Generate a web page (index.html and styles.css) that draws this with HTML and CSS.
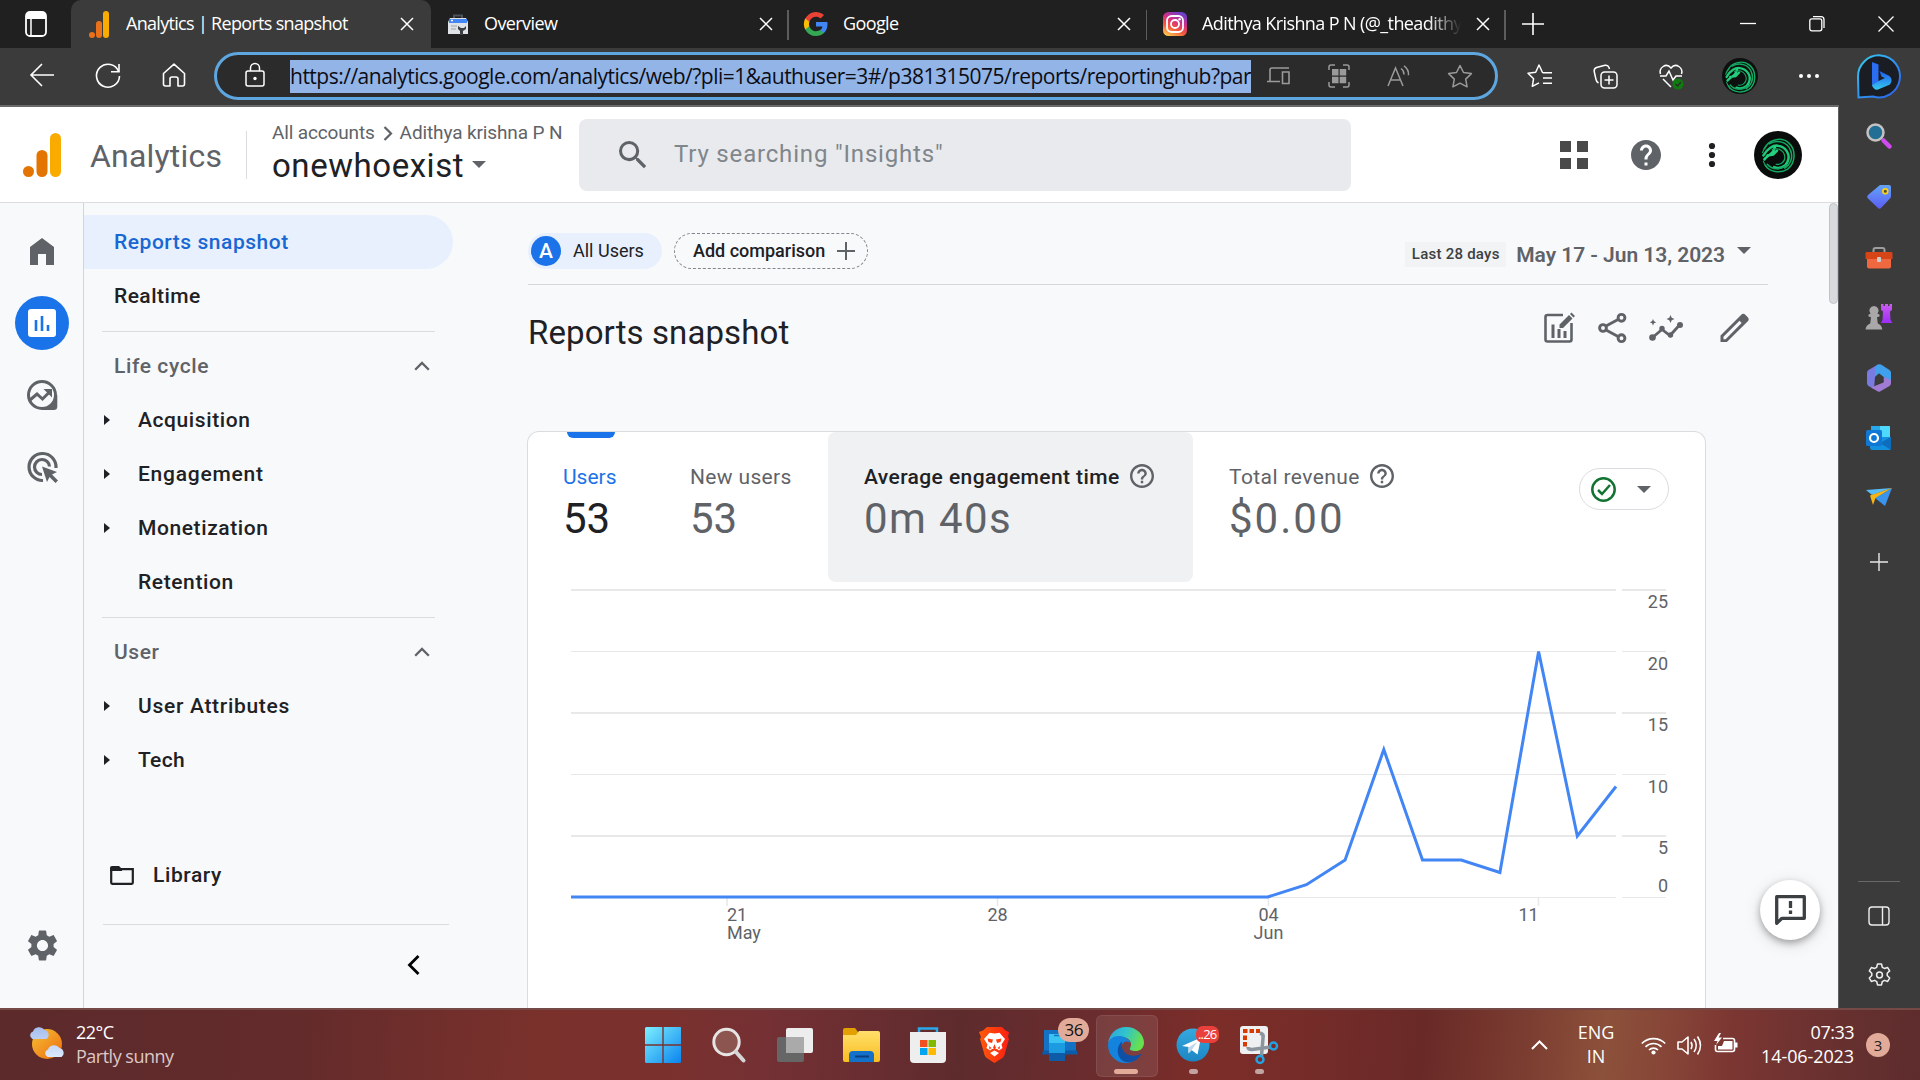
FILE: index.html
```html
<!DOCTYPE html>
<html lang="en">
<head>
<meta charset="utf-8">
<title>Analytics | Reports snapshot</title>
<link rel="stylesheet" href="styles.css">
</head>
<body>
<svg class="defs" width="0" height="0">
  <defs>
    <linearGradient id="gBlue" x1="0" y1="0" x2="1" y2="1"><stop offset="0" stop-color="#7df0ff"/><stop offset="1" stop-color="#0a84ee"/></linearGradient>
    <linearGradient id="gInsta" x1="0.2" y1="1" x2="0.7" y2="0"><stop offset="0" stop-color="#fdc94f"/><stop offset=".35" stop-color="#f4553c"/><stop offset=".65" stop-color="#cf2f88"/><stop offset="1" stop-color="#6a3fd0"/></linearGradient>
    <linearGradient id="gSun" x1="0" y1="0" x2="1" y2="1"><stop offset="0" stop-color="#f3c234"/><stop offset="1" stop-color="#f06a10"/></linearGradient>
    <linearGradient id="gFolder" x1="0" y1="0" x2="0" y2="1"><stop offset="0" stop-color="#ffe06a"/><stop offset="1" stop-color="#f9bd22"/></linearGradient>
    <linearGradient id="gBing" x1="0" y1="0" x2="0" y2="1"><stop offset="0" stop-color="#1d5cf0"/><stop offset="1" stop-color="#36c8f0"/></linearGradient>
    <linearGradient id="gRing" x1="0" y1="0" x2="1" y2="1"><stop offset="0" stop-color="#35cdf0"/><stop offset="1" stop-color="#2a5cf0"/></linearGradient>
    <linearGradient id="gEdge" x1="0" y1="0" x2="1" y2=".3"><stop offset="0" stop-color="#2c9fdf"/><stop offset=".5" stop-color="#30c3cf"/><stop offset="1" stop-color="#66e04f"/></linearGradient>
    <linearGradient id="gTag" x1="0" y1="0" x2="0" y2="1"><stop offset="0" stop-color="#62a4f6"/><stop offset="1" stop-color="#5d5cf5"/></linearGradient>
    <linearGradient id="gRook" x1="0" y1="0" x2="0" y2="1"><stop offset="0" stop-color="#cc5cf2"/><stop offset="1" stop-color="#9d2df5"/></linearGradient>
    <linearGradient id="gCloud" x1="0" y1="0" x2="0" y2="1"><stop offset="0" stop-color="#a5bdf0"/><stop offset="1" stop-color="#dbe8fb"/></linearGradient>
    <linearGradient id="gTele" x1="0" y1="0" x2="0" y2="1"><stop offset="0" stop-color="#35a9df"/><stop offset="1" stop-color="#1c86c4"/></linearGradient>
    <linearGradient id="gBrave" x1="0" y1="0" x2="1" y2="0"><stop offset="0" stop-color="#ff5a0a"/><stop offset="1" stop-color="#fb1f12"/></linearGradient>
    <symbol id="dragon" viewBox="6.500 5 35 37">
      <g fill="none" stroke="#14a862" stroke-linecap="round">
        <path stroke-width="1.600" d="M10 17C14 8 27 4 35 11c8 7 7 21-1 27-8 5-19 3-23-4"/>
        <path stroke-width="2.600" stroke="#1fc877" d="M9 24c4-7 10-11 15-10 8 1 13 9 10 16-2 6-9 8-14 6"/>
        <path stroke-width="1.600" d="M15 12c8-5 19-2 22 7 3 8-1 15-6 18M13 33c5 6 14 6 20 1"/>
        <path stroke-width="2.600" stroke="#22d07d" d="M10 28c3-4 6-4 9-8l2-5M13 24l6-1 4-4"/>
        <path stroke-width="1.200" d="M18 18c7-3 13 2 13 8 0 5-5 8-9 7M8 21c1-3 2-5 4-7M9 30c1 3 2 5 4 7"/>
      </g>
    </symbol>
    <symbol id="close" viewBox="0 0 14 14"><path d="M1 1l12 12M13 1L1 13" fill="none" stroke="#fff" stroke-width="1.500"/></symbol>
    <symbol id="bars" viewBox="0 0 38 44"><rect x="27" width="11" height="44" rx="5.500" fill="#f9ab00"/><rect x="13.500" y="17" width="11" height="27" rx="5.500" fill="#e37400"/><circle cx="5.500" cy="38.500" r="5.500" fill="#e37400"/></symbol>
    <symbol id="help" viewBox="2 2 20 20"><path d="M11 18h2v-2h-2v2zm1-16C6.480 2 2 6.480 2 12s4.480 10 10 10 10-4.480 10-10S17.520 2 12 2zm0 18c-4.410 0-8-3.590-8-8s3.590-8 8-8 8 3.590 8 8-3.590 8-8 8zm0-14c-2.210 0-4 1.790-4 4h2c0-1.100.9-2 2-2s2 .9 2 2c0 2-3 1.750-3 5h2c0-2.250 3-2.500 3-5 0-2.210-1.790-4-4-4z"/></symbol>
    <symbol id="up" viewBox="0 0 16 10"><path d="M1.200 8.800L8 2l6.800 6.800" fill="none" stroke="#5f6368" stroke-width="2.300"/></symbol>
    <symbol id="gear" viewBox="2 2 20 20"><path d="M19.140 12.940c.04-.3.06-.61.06-.94 0-.32-.02-.64-.07-.94l2.030-1.580c.18-.14.23-.41.12-.61l-1.920-3.320c-.12-.22-.37-.29-.59-.22l-2.390.96c-.5-.38-1.030-.7-1.620-.94l-.36-2.540c-.04-.24-.24-.41-.48-.41h-3.840c-.24 0-.43.17-.47.41l-.36 2.540c-.59.24-1.130.57-1.620.94l-2.390-.96c-.22-.08-.47 0-.59.22L2.740 8.870c-.12.21-.08.47.12.61l2.030 1.580c-.05.3-.09.63-.09.94s.02.64.07.94l-2.030 1.580c-.18.14-.23.41-.12.61l1.920 3.320c.12.22.37.29.59.22l2.390-.96c.5.38 1.030.7 1.620.94l.36 2.540c.05.24.24.41.48.41h3.840c.24 0 .44-.17.47-.41l.36-2.540c.59-.24 1.130-.56 1.620-.94l2.390.96c.22.08.47 0 .59-.22l1.920-3.320c.12-.22.07-.47-.12-.61l-2.010-1.580zM12 15.600c-1.980 0-3.600-1.620-3.600-3.600s1.620-3.600 3.600-3.600 3.600 1.620 3.600 3.600-1.620 3.600-3.600 3.600z"/></symbol>
  </defs>
</svg>
<div class="screen">
  <header class="tabstrip">
    <div class="tab-actions"><svg width="22" height="26" viewBox="0 0 22 26"><rect x="1" y="1" width="20" height="24" rx="4" fill="none" stroke="#fff" stroke-width="1.800"/><path d="M1 4q0-3 3-3h14q3 0 3 3v4H1z" fill="#fff"/><path d="M6 8v16" stroke="#fff" stroke-width="1.500"/></svg></div>
    <div class="tab active">
      <svg class="fav" width="20" height="27" viewBox="0 0 20 27"><rect x="14" width="6" height="27" rx="3" fill="#f9ab00"/><rect x="7" y="10" width="6" height="17" rx="3" fill="#e8711a"/><circle cx="3" cy="24" r="3" fill="#e8711a"/></svg>
      <span class="tab-title t1">Analytics | Reports snapshot</span>
      <svg class="x" width="14" height="14"><use href="#close"/></svg>
    </div>
    <div class="tab tab-overview">
      <svg class="fav" width="20" height="21" viewBox="0 0 20 21"><path d="M6 5V1.500h8V5" fill="none" stroke="#4d5358" stroke-width="2"/><path d="M2 4h16l2 4v12H0V8z" fill="#dfe3e8"/><path d="M1 5h18v4H1z" fill="#4285f4"/><path d="M3 6.500h2" stroke="#fff" stroke-width="1.500"/><path d="M3 12h6M3 15h5" stroke="#b5bac0" stroke-width="1.500"/><path d="M10 12v3l2 2v4h3v-4l3-2v-3l-2 2h-3z" fill="#3c4043"/></svg>
      <span class="tab-title t2">Overview</span>
      <svg class="x" width="14" height="14"><use href="#close"/></svg>
    </div>
    <div class="tab tab-google">
      <svg class="fav" width="24" height="24" viewBox="0 0 24 24"><path d="M23.500 12.300c0-.8-.1-1.600-.2-2.300H12v4.500h6.500a5.600 5.600 0 0 1-2.400 3.600v3h3.900c2.200-2.100 3.500-5.200 3.500-8.800z" fill="#4285f4"/><path d="M12 24c3.200 0 6-1.100 8-2.900l-3.900-3c-1.100.7-2.500 1.200-4.100 1.200-3.100 0-5.800-2.100-6.700-5H1.200v3.100A12 12 0 0 0 12 24z" fill="#34a853"/><path d="M5.300 14.300a7.200 7.200 0 0 1 0-4.600V6.600H1.200a12 12 0 0 0 0 10.800z" fill="#fbbc05"/><path d="M12 4.700c1.800 0 3.300.6 4.600 1.800L20 3.100A12 12 0 0 0 1.200 6.600l4.100 3.100c.9-2.900 3.600-5 6.700-5z" fill="#ea4335"/></svg>
      <span class="tab-title t3">Google</span>
      <svg class="x" width="14" height="14"><use href="#close"/></svg>
    </div>
    <div class="tab tab-insta">
      <svg class="fav" width="24" height="24" viewBox="0 0 24 24"><rect width="24" height="24" rx="5.500" fill="url(#gInsta)"/><g fill="none" stroke="#fff" stroke-width="1.800"><rect x="4" y="4" width="16" height="16" rx="4.500"/><circle cx="12" cy="12" r="4"/></g><circle cx="16.600" cy="7.300" r="1.200" fill="#fff"/></svg>
      <span class="tab-title t4">Adithya Krishna P N (@_theadithy</span>
      <svg class="x" width="14" height="14"><use href="#close"/></svg>
    </div>
    <svg class="newtab" width="22" height="22" viewBox="0 0 22 22"><path d="M11 0v22M0 11h22" stroke="#fff" stroke-width="1.600"/></svg>
    <div class="wincontrols">
      <svg width="16" height="16"><path d="M0 7.500h16" stroke="#fff" stroke-width="1.300"/></svg>
      <svg width="16" height="16" viewBox="0 0 16 16"><g fill="none" stroke="#fff" stroke-width="1.300"><rect x=".8" y="2.800" width="12" height="12" rx="2"/><path d="M4 .7h8a3 3 0 0 1 3 3V12"/></g></svg>
      <svg width="16" height="16" viewBox="0 0 16 16"><path d="M.5.5l15 15M15.500.5l-15 15" stroke="#fff" stroke-width="1.300"/></svg>
    </div>
  </header>

  <div class="toolbar">
    <div class="nav-buttons">
      <svg width="24" height="24" viewBox="0 0 24 24"><path d="M24 12H1M12 1L1 12l11 11" fill="none" stroke="#fff" stroke-width="1.600"/></svg>
      <svg width="26" height="26" viewBox="0 0 26 26"><path d="M23.700 8.500A11.500 11.500 0 1 0 24.500 13" fill="none" stroke="#fff" stroke-width="1.600"/><path d="M24 1v7.700h-8" fill="none" stroke="#fff" stroke-width="1.600"/></svg>
      <svg width="24" height="24" viewBox="0 0 24 24"><path d="M1.500 10.500L12 1.200l10.500 9.300V21a2 2 0 0 1-2 2H16v-7a2 2 0 0 0-2-2h-4a2 2 0 0 0-2 2v7H3.500a2 2 0 0 1-2-2z" fill="none" stroke="#fff" stroke-width="1.600" stroke-linejoin="round"/></svg>
    </div>
    <div class="address">
      <svg class="lock" width="20" height="24" viewBox="0 0 20 24"><g fill="none" stroke="#fff" stroke-width="1.500"><rect x="1" y="8" width="18" height="15" rx="2"/><path d="M5.500 8V5a4.500 4.500 0 0 1 9 0v3"/></g><circle cx="10" cy="15.500" r="1.700" fill="#fff"/></svg>
      <span class="url">https://analytics.google.com/analytics/web/?pli=1&amp;authuser=3#/p381315075/reports/reportinghub?par</span>
      <div class="addr-icons">
        <svg width="24" height="18" viewBox="0 0 24 18"><path d="M3 14V3a2 2 0 0 1 2-2h17M0 14.500h13M15.500 5h6.500v11.500h-6.500z" fill="none" stroke="#9a9a9a" stroke-width="1.600"/></svg>
        <svg width="22" height="26" viewBox="0 0 22 26"><path d="M1 7V4a2 2 0 0 1 2-2h4M15 2h4a2 2 0 0 1 2 2v3M21 19v3a2 2 0 0 1-2 2h-4M7 24H3a2 2 0 0 1-2-2v-3" fill="none" stroke="#9a9a9a" stroke-width="1.500"/><path d="M4 6h6.500v6.500H4zM11.700 6h6.500v6.500h-6.500zM4 13.700h6.500v6.500H4zM11.700 13.700h6.500v6.500h-6.500z" fill="#9a9a9a"/></svg>
        <svg width="23" height="22" viewBox="0 0 23 22"><path d="M1 21L8.500 3 16 21M3.500 15h10M14 3.500q3 2 3 6M17 .8q5 3.500 4.500 9.500" fill="none" stroke="#9a9a9a" stroke-width="1.500"/></svg>
        <svg width="26" height="24" viewBox="0 0 26 24"><path d="M13 1.500l3.500 7 7.900 1.100-5.700 5.500 1.400 7.700L13 19.200l-7.100 3.600 1.400-7.700L1.600 9.600l7.900-1.100z" fill="none" stroke="#9a9a9a" stroke-width="1.500" stroke-linejoin="round"/></svg>
      </div>
    </div>
    <div class="tools">
      <svg width="25" height="24" viewBox="0 0 25 24"><path d="M16 8.500h-.5L12 1 8.700 8.300 1 9.200l5.600 5.500-1.300 7.600L12 18.800M16 8.700h9M16 14h9M16 19.200h9" fill="none" stroke="#fff" stroke-width="1.500" stroke-linejoin="round"/></svg>
      <svg width="25" height="25" viewBox="0 0 25 25"><g fill="none" stroke="#fff" stroke-width="1.500"><rect x="8" y="8" width="16" height="16" rx="3.500"/><path d="M16 11.500v9M11.500 16h9M5.500 19Q3.500 18 3 15.500L1.200 7.500Q.8 4.500 3.500 3.500L12 1.300q3-.6 4 2.200L16.500 5"/></g></svg>
      <svg width="25" height="25" viewBox="0 0 25 25"><path d="M1.500 10C-.5 4 7-2 12 4c5-6 12.500 0 10.500 6M1 12h6l3-5 4 9 3-4h6M4 15l8 8" fill="none" stroke="#fff" stroke-width="1.500"/><circle cx="19" cy="20" r="5.500" fill="#0f7b0f"/><path d="M16.500 20l2 2 3.500-4" stroke="#2b2b2b" stroke-width="1.300" fill="none"/></svg>
      <span class="profile"><svg width="32" height="33"><use href="#dragon"/></svg></span>
      <svg width="22" height="6"><g fill="#fff"><circle cx="3" cy="3" r="2"/><circle cx="11" cy="3" r="2"/><circle cx="19" cy="3" r="2"/></g></svg>
    </div>
    <svg class="bing" width="46" height="48" viewBox="0 0 46 48"><path d="M2.500 45.500L2 25A21 21 0 1 1 17 44.500z" fill="#1b1d24" stroke="url(#gRing)" stroke-width="2"/><path d="M16 10l6.500 2.500v17L16 33z" fill="#2a6df2"/><path d="M16 33l6.500-4 6.500-3-3.500-1.500-2-5.500 10 5q4 4 .5 8.500L22 37.500q-4 1-6-4z" fill="url(#gBing)"/></svg>
  </div>

  <div class="window">
    <div class="page">
      <header class="app-header">
        <svg class="logo" width="38" height="44"><use href="#bars"/></svg>
        <span class="brand">Analytics</span>
        <div class="account">
          <div class="crumbs"><span class="c1">All accounts</span><svg width="10" height="15" viewBox="0 0 10 15"><path d="M1.500 1l6.500 6.500L1.500 14" fill="none" stroke="#5f6368" stroke-width="2.200"/></svg><span class="c2">Adithya krishna P N</span></div>
          <div class="property"><span>onewhoexist</span><i class="tri"></i></div>
        </div>
        <div class="search">
          <svg width="28" height="28" viewBox="3 3 18 18" fill="#5f6368"><path d="M15.500 14h-.79l-.28-.27A6.470 6.470 0 0 0 16 9.500 6.500 6.500 0 1 0 9.500 16c1.610 0 3.090-.59 4.230-1.570l.27.28v.79l5 4.990L20.490 19l-4.990-5zm-6 0C7.010 14 5 11.990 5 9.500S7.010 5 9.500 5 14 7.010 14 9.500 11.990 14 9.500 14z"/></svg>
          <span>Try searching "Insights"</span>
        </div>
        <div class="header-icons">
          <svg width="28" height="28" fill="#4a4a4a"><path d="M0 0h11v11H0zM17 0h11v11H17zM0 17h11v11H0zM17 17h11v11H17z"/></svg>
          <svg width="30" height="30" viewBox="2 2 20 20" fill="#5f6368"><path d="M12 2C6.480 2 2 6.480 2 12s4.480 10 10 10 10-4.480 10-10S17.520 2 12 2zm1 17h-2v-2h2v2zm2.070-7.750l-.9.920C13.450 12.900 13 13.500 13 15h-2v-.5c0-1.100.45-2.100 1.170-2.830l1.240-1.260c.37-.36.59-.86.59-1.410 0-1.100-.9-2-2-2s-2 .9-2 2H8c0-2.210 1.790-4 4-4s4 1.790 4 4c0 .88-.36 1.680-.93 2.250z"/></svg>
          <svg width="8" height="24" fill="#202124"><circle cx="4" cy="3" r="3.100"/><circle cx="4" cy="12" r="3.100"/><circle cx="4" cy="21" r="3.100"/></svg>
          <span class="avatar"><svg width="34" height="36"><use href="#dragon"/></svg></span>
        </div>
      </header>
      <div class="app-body">
        <nav class="rail">
          <svg class="r-home" width="24" height="27" viewBox="0 0 24 27" fill="#5f6368"><path d="M12 0l12 9v18h-8V16H8v11H0V9z"/></svg>
          <span class="r-active"><svg width="28" height="28" viewBox="0 0 28 28"><rect width="28" height="28" rx="3" fill="#fff"/><path d="M8 11v11M14 7v15M20 16v6" stroke="#1a73e8" stroke-width="2.600"/></svg></span>
          <svg class="r-explore" width="31" height="30" viewBox="0 0 31 30"><path d="M28.800 15v11.500q0 2-2 2H15" fill="none" stroke="#5f6368" stroke-width="3"/><circle cx="15" cy="15" r="13.500" fill="none" stroke="#5f6368" stroke-width="3"/><path d="M20 28l8-7v7z" fill="#5f6368"/><path d="M3 20l7-6 5.500 5 8-8" fill="none" stroke="#5f6368" stroke-width="3"/><path d="M16.500 9H25v8.500z" fill="#5f6368"/></svg>
          <svg class="r-ads" width="31" height="31" viewBox="0 0 31 31"><path d="M16 28.500A13.500 13.500 0 1 1 29 16M15 22.500A7.500 7.500 0 1 1 22.500 14.500" fill="none" stroke="#5f6368" stroke-width="3.200"/><path d="M15 14.500l15 5.500-5 2.500 6 6-2.500 2.500-6-6-2.500 5z" fill="#5f6368"/></svg>
          <svg class="r-gear" width="31" height="31" fill="#5f6368"><use href="#gear"/></svg>
        </nav>
        <nav class="sidenav">
          <div class="item selected"><span class="n1">Reports snapshot</span></div>
          <div class="item"><span class="n2">Realtime</span></div>
          <hr>
          <div class="item group"><span>Life cycle</span><svg width="16" height="10"><use href="#up"/></svg></div>
          <div class="item sub"><i></i><span>Acquisition</span></div>
          <div class="item sub"><i></i><span class="n5">Engagement</span></div>
          <div class="item sub"><i></i><span>Monetization</span></div>
          <div class="item sub leaf"><i></i><span>Retention</span></div>
          <hr>
          <div class="item group"><span>User</span><svg width="16" height="10"><use href="#up"/></svg></div>
          <div class="item sub"><i></i><span class="n9">User Attributes</span></div>
          <div class="item sub"><i></i><span class="n10">Tech</span></div>
          <div class="item library"><svg width="24" height="19" viewBox="0 0 24 19"><path d="M1.200 3.200h21.600v13.600q0 1-1 1H2.200q-1 0-1-1z" fill="none" stroke="#202124" stroke-width="2.200"/><path d="M0 2Q0 0 2 0h7l3 3v2H0z" fill="#202124"/></svg><span>Library</span></div>
          <hr class="wide">
          <div class="collapse"><svg width="13" height="20" viewBox="0 0 13 20"><path d="M11.500 1L2.500 10l9 9" fill="none" stroke="#000" stroke-width="2.800"/></svg></div>
        </nav>
        <main class="content">
          <div class="filters">
            <div class="chip-users"><b>A</b><span>All Users</span></div>
            <div class="chip-add"><span>Add comparison</span><svg width="18" height="18"><path d="M9 0v18M0 9h18" stroke="#5f6368" stroke-width="2"/></svg></div>
            <div class="daterange"><span class="preset">Last 28 days</span><span class="dates">May 17 - Jun 13, 2023</span><i class="tri"></i></div>
          </div>
          <div class="titlebar">
            <h1>Reports snapshot</h1>
            <div class="actions">
              <svg width="30" height="30" viewBox="0 0 30 30"><path d="M19 2H3.500Q1.500 2 1.500 4v22.500q0 2 2 2h22q2 0 2-2V10" fill="none" stroke="#5f6368" stroke-width="2.600"/><path d="M9 11.500V25M15 16v9M21 18v7" stroke="#5f6368" stroke-width="3"/><path d="M15.500 15v-3.500L25 2l3.500 3.500-9.500 9.500zM26 1l1.500-1.500 3.500 3.500L29.500 4.500z" fill="#5f6368"/></svg>
              <svg width="29" height="30" viewBox="0 0 29 30"><g fill="none" stroke="#5f6368" stroke-width="2.900"><path d="M8 13l13-7M8 17l13 7"/><circle cx="5" cy="15" r="3.400"/><circle cx="23.500" cy="4.800" r="3.400"/><circle cx="23.500" cy="25.200" r="3.400"/></g></svg>
              <svg width="34" height="26" viewBox="0 0 34 26" fill="#5f6368"><path d="M3.500 22.500l9.500-8 8 6L31 9.500" fill="none" stroke="#5f6368" stroke-width="2.800"/><circle cx="3.500" cy="22.500" r="3.300"/><circle cx="13" cy="13.500" r="2.700"/><circle cx="21.500" cy="20" r="2.700"/><circle cx="31" cy="10" r="3"/><path d="M21.500 0l1.200 2.800 2.800 1.200-2.800 1.200L21.500 8l-1.200-2.800L17.500 4l2.800-1.200zM4 4l1 2.200L7.200 7.200 5 8.200 4 10.500l-1-2.300L.8 7.200 3 6.200z"/></svg>
              <svg width="29" height="28" viewBox="3 3 18 18" fill="#5f6368"><path d="M20.400 4.900l-1.300-1.300a2 2 0 0 0-2.900 0L3 16.900V21h4.100L20.400 7.800a2 2 0 0 0 0-2.900zM6.300 19.200H4.900v-1.500L15.200 7.400l1.400 1.400z"/></svg>
            </div>
          </div>
          <section class="card">
            <div class="metrics">
              <div class="metric current"><div class="label"><span>Users</span></div><div class="value">53</div></div>
              <div class="metric m-new"><div class="label"><span class="m2">New users</span></div><div class="value">53</div></div>
              <div class="metric hover"><div class="label"><span class="m3">Average engagement time</span><svg width="24" height="24" fill="#5f6368"><use href="#help"/></svg></div><div class="value v3">0m 40s</div></div>
              <div class="metric"><div class="label"><span class="m4">Total revenue</span><svg width="24" height="24" fill="#5f6368"><use href="#help"/></svg></div><div class="value v4">$0.00</div></div>
              <div class="status"><svg width="25" height="25" viewBox="0 0 25 25"><circle cx="12.500" cy="12.500" r="11.200" fill="none" stroke="#137333" stroke-width="2.500"/><path d="M7 13l4 4 8-9" fill="none" stroke="#137333" stroke-width="2.500"/></svg><i class="tri"></i></div>
            </div>
            <svg class="chart" width="1177" height="425" viewBox="528 583 1177 425">
              <g stroke="#e8e8e8"><path stroke-width="2" d="M571 590h1045M1622 590h44M571 713h1045M1622 713h44M571 836h1045M1622 836h44"/><path stroke-width="1" d="M571 651.500h1045M1622 651.500h44M571 774.500h1045M1622 774.500h44M571 897.500h1045M1622 897.500h44"/><path stroke-width="1.500" d="M727 898v8M997.500 898v8M1268.500 898v8M1538.500 898v8"/></g>
              <polyline fill="none" stroke="#4285f4" stroke-width="3" points="571,897 1267.700,897 1306.400,884.700 1345.100,860 1383.800,749.500 1422.500,860 1461.200,860 1499.900,872.500 1538.600,651.500 1577.300,836 1616,786.500"/>
              <g class="axis"><g text-anchor="end"><text x="1668" y="608">25</text><text x="1668" y="670">20</text><text x="1668" y="731">15</text><text x="1668" y="793">10</text><text x="1668" y="854">5</text><text x="1668" y="892">0</text></g>
              <text x="727" y="921">21</text><text x="727" y="939">May</text>
              <g text-anchor="middle"><text x="997.500" y="921">28</text><text x="1268.500" y="921">04</text><text x="1268.500" y="939">Jun</text><text x="1528.500" y="921">11</text></g></g>
            </svg>
          </section>
          <i class="scrollbar"></i>
          <button class="feedback"><svg width="31" height="31" viewBox="0 0 31 31"><path d="M1.700 1.700h27.600v21.600H7l-5.300 5z" fill="none" stroke="#3c4043" stroke-width="3.300" stroke-linejoin="round"/><path d="M15.500 6v7M15.500 15.500V19" stroke="#3c4043" stroke-width="3.300"/></svg></button>
        </main>
      </div>
    </div>
    <aside class="edgebar">
      <svg width="26" height="26" viewBox="0 0 26 26"><path d="M17.500 17.500l6 6" stroke="#cf4bf0" stroke-width="4.500" stroke-linecap="round"/><circle cx="9.500" cy="9.500" r="8" fill="#226f96" stroke="#c4c2c0" stroke-width="2.500"/></svg>
      <svg width="26" height="26" viewBox="0 0 26 26"><path d="M14 1h9q2 0 2 2v9q0 1.500-1 2.500l-9 9.500q-1.500 1.500-3 0L1.500 14Q.5 12.500 2 11z" fill="url(#gTag)"/><circle cx="19.300" cy="7.300" r="2.400" fill="#4b4f33" stroke="#ffcf12" stroke-width="1.700"/></svg>
      <svg width="28" height="22" viewBox="0 0 28 22"><path d="M8.500 6V3q0-2 2-2h7q2 0 2 2v3" fill="none" stroke="#9d9d9d" stroke-width="2"/><rect x="2" y="8" width="24" height="13.500" rx="2" fill="#f0683f"/><path d="M1.500 5h25q1 0 1 1.500V12H.5V6.500q0-1.500 1-1.500z" fill="#d64517"/><rect x="12" y="10" width="4" height="5" rx="1" fill="#ccc"/></svg>
      <svg width="28" height="28" viewBox="0 0 28 28"><path d="M16 1h2.500v2H20V1h3v2h1.500V1H27v6l-2 1.500L25.500 17l2 3H16l1.500-3L18 8.500 16 7z" fill="url(#gRook)"/><path d="M9 3a4.700 4.700 0 0 1 3.500 7.800l2 .7v2l-2.500.7.8 6.300q4 1.500 4.500 6H.5q.5-4.500 4.700-6L6 14.200l-2.500-.7v-2l2-.7A4.700 4.700 0 0 1 9 3z" fill="#a9a7a7"/></svg>
      <svg width="26" height="28" viewBox="0 0 26 28"><path d="M12 .5L2.500 6Q1 7 1 9v10q0 2 1.500 3L8 25l1-12z" fill="#7a7be0"/><path d="M12 .5q1.500-.7 3 0L23.500 6Q25 7 25 9v9l-7.500-5L13 9.500 9 13V5q0-3 3-4.500z" fill="#40a0ee"/><path d="M25 16v3q0 2-1.500 3L14 27.500q-1 .5-2 0L5 23.500l12.500-5V13z" fill="#a07bd4"/><path d="M13 9.500l4.500 3.500v5L13 19.500 9.500 17v-4.500z" fill="#3b3b3b"/></svg>
      <svg width="26" height="26" viewBox="0 0 26 26"><path d="M5 1h18q1 0 1 1v20H5z" fill="#28a8ea"/><path d="M14 1h9q1 0 1 1v11H14z" fill="#50d9ff"/><path d="M4 12l21 0v11q0 2-2 2H6q-2 0-2-2z" fill="#1490df"/><path d="M25 12v13L14 18z" fill="#0f6dbd"/><rect x="0" y="5" width="16" height="16" rx="1.500" fill="#0f78d4"/><circle cx="8" cy="13" r="4" fill="none" stroke="#fff" stroke-width="2.200"/></svg>
      <svg width="27" height="20" viewBox="0 0 27 20"><path d="M0 3l26-2-20 7z" fill="#58bdf5"/><path d="M26 1l-7 18-10-8z" fill="#3a94ec"/><path d="M26 1L4 8.500 7 18l2.500-7z" fill="#f7b416"/></svg>
      <svg class="add" width="18" height="18"><path d="M9 0v18M0 9h18" stroke="#e8e8e8" stroke-width="1.400"/></svg>
      <i class="sep"></i>
      <svg width="22" height="20" viewBox="0 0 22 20"><path d="M4 1h14q3 0 3 3v12q0 3-3 3H4q-3 0-3-3V4q0-3 3-3zM14.500 1v18" fill="none" stroke="#eee" stroke-width="1.400"/></svg>
      <svg width="25" height="26" viewBox="1.300 1.300 21.400 21.400"><path d="M10.300 2.500h3.400l.7 2.900 1.800 1 2.800-.8 1.700 2.900-2.100 2v2l2.100 2.100-1.700 2.900-2.800-.9-1.800 1-.7 2.900h-3.400l-.7-2.900-1.800-1-2.800.9-1.700-2.900 2.100-2.100v-2l-2.100-2L5 5.600l2.800.8 1.800-1z" fill="none" stroke="#eee" stroke-width="1.300" stroke-linejoin="round"/><circle cx="12" cy="12" r="2.500" fill="none" stroke="#eee" stroke-width="1.300"/></svg>
    </aside>
  </div>

  <footer class="taskbar">
    <div class="weather">
      <svg width="36" height="34" viewBox="0 0 36 34"><circle cx="18" cy="18" r="15" fill="url(#gSun)"/><path d="M3.500 13a4 4 0 0 1 .5-7.500A6.500 6.500 0 0 1 15.500 4a5 5 0 0 1 2 9zM18.500 31a4 4 0 0 1 .5-7.500A6.500 6.500 0 0 1 30.500 22a5 5 0 0 1 2 9z" fill="url(#gCloud)"/></svg>
      <div><p>22°C</p><p class="dim">Partly sunny</p></div>
    </div>
    <div class="apps">
      <span><svg width="36" height="36" viewBox="0 0 36 36" fill="url(#gBlue)"><path d="M1.500 0h34q.5 0 .5.500v34q0 1.500-1.500 1.500H1.500Q0 36 0 34.500v-33Q0 0 1.500 0zM17.300 0v17.300H0v1.400h17.300V36h1.400V18.700H36v-1.400H18.700V0z" fill-rule="evenodd"/></svg></span>
      <span><svg width="34" height="36" viewBox="0 0 34 36"><circle cx="14.500" cy="15" r="12.700" fill="#8d5550" stroke="#e6e4e4" stroke-width="3"/><path d="M24 25l7.500 8.500" stroke="#d5d5d5" stroke-width="4" stroke-linecap="round"/></svg></span>
      <span><svg width="37" height="34" viewBox="0 0 37 34"><rect x="0" y="9" width="27" height="25" rx="2" fill="#666"/><rect x="9" y="0" width="27" height="25" rx="2" fill="#ededed"/><path d="M9 9h18v16H9z" fill="#aaa"/></svg></span>
      <span><svg width="37" height="34" viewBox="0 0 37 34"><path d="M0 2Q0 0 2 0h10l3 4v6H0z" fill="#e2a100"/><path d="M0 7h13l3-4h19q2 0 2 2v27q0 2-2 2H2q-2 0-2-2z" fill="url(#gFolder)"/><path d="M6 34V27q0-4 4-4h17q4 0 4 4v7z" fill="#1471c9"/><path d="M12 28.500h14" stroke="#0b3f80" stroke-width="2"/></svg></span>
      <span><svg width="36" height="36" viewBox="0 0 36 36"><path d="M9 7V1.500h18V7" fill="none" stroke="#2aa8ea" stroke-width="2.500"/><path d="M0 5h36v27q0 4-4 4H4q-4 0-4-4z" fill="#eee"/><path d="M10 13h7.500v7H10z" fill="#f25022"/><path d="M18.500 13H26v7h-7.500z" fill="#7fba00"/><path d="M10 21h7.500v7H10z" fill="#00a4ef"/><path d="M18.500 21H26v7h-7.500z" fill="#ffb900"/></svg></span>
      <span><svg width="31" height="36" viewBox="0 0 31 36"><path d="M8 0h15l3.500 3.500L30 5l-1 5 1 2-4.500 16q-.7 2-3 3.500l-7 4.500-7-4.500q-2.300-1.500-3-3.500L1 12l1-2-2-5 4-1.500z" fill="url(#gBrave)"/><path d="M15.500 6.500l5-.8 5.500 6.300-3.500 5.500 1 3.500-3.500 2.500-2-1.500h-5l-2 1.500-3.500-2.500 1-3.500L5 12l5.500-6.300zM11 26l4.500-2.500L20 26l-4.500 3.500z" fill="#fff"/><path d="M8.500 11.500l5.500 1-1 3.500-3.500-1zM22.500 11.500l-5.500 1 1 3.500 3.500-1zM15.500 17l1.500 4-1.500 1.500L14 21zM10 19l2.500 2-2 1.500zM21 19l-2.500 2 2 1.500z" fill="#fd3d10"/></svg></span>
      <span class="phone"><svg width="36" height="34" viewBox="0 0 36 34"><path d="M2 2h32v22H2z" fill="#1372c4"/><path d="M1 22.500h34l1 4H0z" fill="#0b5ba8"/><path d="M7 6h16v27H7z" fill="#38c3f3"/><path d="M7 15h16v10H7z" fill="#1c9be0"/><path d="M7 25h16v8H7z" fill="#0e5ca8"/><path d="M12 7.500h6" stroke="#1372c4" stroke-width="1.500"/></svg><b class="badge">36</b></span>
      <span class="running focus"><svg width="36" height="36" viewBox="0 0 36 36"><path d="M0 17C1 7 8 0 18 0c11 0 18 8 18 15.500C36 21.500 32 24 27.500 24c-4 0-6.500-1.300-5.500-3 2.500-4 .5-9-5-10.500C9 8.500 2 11 0 17z" fill="url(#gEdge)"/><path d="M0 18C1 10 10 7 17 10.500c3 1.500 4.500 3.500 5 5.500-3-3-8-1.500-8.500 4C13 27 18 33 25.500 34.300 13 40 0 31 0 18z" fill="#1483de"/><path d="M14 14.500c-2 9 5 16 14 14 2.500-.5 4-2 5.500-1.500C30 33 24 36 18 35 9 33 7 20 14 14.500z" fill="#0f4fa5"/></svg></span>
      <span class="running tele"><svg width="34" height="34" viewBox="0 0 34 34"><circle cx="17" cy="17" r="16.500" fill="url(#gTele)"/><path d="M6 18l19-8.500-3.500 17-6-4.500-3 3v-6z" fill="#fff"/><path d="M12.500 19.500L21 14l-5.500 8.500-3 3z" fill="#bcd8ea"/></svg><b class="mini">..26</b></span>
      <span class="running snip"><svg width="38" height="38" viewBox="0 0 38 38"><rect x="0" y="0" width="28" height="28" rx="3" fill="#eff0f2"/><path d="M3 5h17" stroke="#d83b01" stroke-width="4" stroke-dasharray="4.500 2"/><path d="M5 9.500v11" stroke="#d83b01" stroke-width="4" stroke-dasharray="4.500 2"/><path d="M20 7q4 1 3 5l-1.500 18M8 21q0 2.500 4 2.500l19-2.500" fill="none" stroke="#8c959d" stroke-width="3.500"/><circle cx="33.500" cy="20" r="3.500" fill="none" stroke="#22a2e0" stroke-width="2.500"/><circle cx="20" cy="33.500" r="3.500" fill="none" stroke="#22a2e0" stroke-width="2.500"/></svg></span>
    </div>
    <div class="tray">
      <svg width="17" height="10" viewBox="0 0 17 10"><path d="M1 9l7.500-7.500L16 9" fill="none" stroke="#fff" stroke-width="2"/></svg>
      <div class="lang"><p>ENG</p><p>IN</p></div>
      <svg class="wifi" width="25" height="19" viewBox="0 0 25 19"><g fill="none" stroke="#fff" stroke-width="1.700"><path d="M.8 7.500a16.500 16.500 0 0 1 23.400 0M4.500 10.800a11.300 11.300 0 0 1 16 0M8 14a6.300 6.300 0 0 1 9 0"/></g><circle cx="12.500" cy="16.500" r="2.100" fill="#fff"/></svg>
      <svg class="vol" width="25" height="21" viewBox="0 0 25 21"><g fill="none" stroke="#fff" stroke-width="1.600"><path d="M1 7h4l6-5v17l-6-5H1z" stroke-linejoin="round"/><path d="M14 7q2 3.500 0 7M17 4q4.500 6.500 0 13M20.500 1.500q6 9 0 18"/></g></svg>
      <svg class="bat" width="25" height="21" viewBox="0 0 25 21"><path d="M9 5.500h9.500q2 0 2 2v9q0 2-2 2H3.500q-2 0-2-2V12" fill="none" stroke="#fff" stroke-width="1.600"/><path d="M10 8h8.500v8.500H4V13h4zM21 9.500h2.500v5H21zM5 0L0 8h3.500L2 12l6-7.500H4.700L7 0z" fill="#fff"/></svg>
      <div class="clock"><p>07:33</p><p class="date">14-06-2023</p></div>
      <b class="notif">3</b>
    </div>
  </footer>
</div>
</body>
</html>
```
FILE: styles.css
```css
* { box-sizing: border-box; }
body { margin: 0; overflow: hidden; font-family: Roboto, "Liberation Sans", sans-serif; }
p, h1 { margin: 0; font-weight: 400; }
svg { display: block; flex: none; overflow: visible; }
.defs { position: absolute; }
.screen { width: 1920px; height: 1080px; display: flex; flex-direction: column; background: #3b3b3b; }
.tri { flex: none; border: 7px solid transparent; border-top-color: #5f6368; border-bottom: 0; }

/* Browser tabs */
.tabstrip { height: 48px; flex: none; display: flex; background: #202020; align-items: center; font: 18px/24px "Open Sans", sans-serif; color: #fff; }
.tab-actions { width: 71px; padding-left: 25px; }
.tab { width: 358.500px; height: 48px; display: flex; align-items: center; padding: 0 16px 0 18px; position: relative; }
.tab.active { width: 360px; background: #3b3b3b; border-radius: 10px 10px 0 0; padding-right: 17px; }
.tab.tab-overview { width: 357.500px; padding-left: 17px; }
.tab.tab-google { padding-left: 15.500px; }
.tab.tab-insta { padding-left: 16px; }
.tab:not(.active)::after { content: ""; position: absolute; right: 0; top: 10px; width: 1.500px; height: 30px; background: #5c5c5c; }
.fav { margin-right: 15px; }
.active .fav { margin-right: 17px; }
.tab-overview .fav { margin-right: 16px; }
.tab-title { flex: 1; white-space: nowrap; overflow: hidden; margin-top: -3px; }
.t1 { letter-spacing: -.69px; }
.t2, .t3 { letter-spacing: -.6px; }
.t4 { letter-spacing: -.6px; max-width: 262px; margin-right: 12px; -webkit-mask-image: linear-gradient(90deg, #000 86%, transparent 99%); }
.newtab { margin-left: 16px; }
.wincontrols { margin-left: auto; display: flex; gap: 53px; padding-right: 26px; }

/* Browser toolbar */
.toolbar { height: 59px; flex: none; display: flex; align-items: center; padding: 0 18px 3px 9px; }
.nav-buttons { display: flex; }
.nav-buttons svg { margin: 0 21px; }
.nav-buttons svg:nth-child(2) { margin: 0 20px; }
.address { margin-left: 7px; width: 1284px; height: 48px; border: 3px solid #5ea6df; border-radius: 24px; background: #2b2b2b; display: flex; align-items: center; padding-left: 28px; }
.lock { margin-top: -3px; }
.url { margin-left: 25px; width: 961px; height: 33px; background: #92b4e6; color: #0c0c14; font: 21px/33px "Open Sans", sans-serif; white-space: nowrap; overflow: hidden; letter-spacing: -.5px; }
.addr-icons { display: flex; align-items: center; gap: 37px; margin-left: 16px; }
.tools { display: flex; align-items: center; margin-left: 29px; gap: 41px; }
.profile { width: 36px; height: 36px; margin: 0 0 0 -3px; border-radius: 50%; background: #0d100e; display: flex; align-items: center; justify-content: center; }
.tools svg:last-child { margin-left: -1px; }
.bing { margin-left: auto; }

/* Page viewport */
.window { flex: none; height: 901px; display: flex; }
.page { width: 1839px; background: #f8f9fb; border-right: 1px solid #5e6062; box-shadow: 0 -2px #696969; display: flex; flex-direction: column; }
.app-header { height: 96px; flex: none; background: #fff; border-bottom: 1px solid #dadce0; display: flex; align-items: center; padding-left: 23px; }
.logo { margin-top: 1px; }
.brand { margin-left: 29px; width: 157px; height: 48px; border-right: 1px solid #dadce0; font-size: 32px; line-height: 50px; color: #5f6368; letter-spacing: .2px; }
.account { margin-left: 25px; width: 307px; }
.crumbs { display: flex; align-items: center; font-size: 19px; line-height: 24px; color: #5f6368; white-space: nowrap; margin-top: -2px; }
.crumbs svg { margin: 0 7px 0 8px; }
.c1 { letter-spacing: -.15px; }
.c2 { letter-spacing: -.12px; }
.property { display: flex; align-items: center; font-size: 33px; line-height: 40px; color: #202124; letter-spacing: .55px; margin-top: 1px; }
.property .tri { margin: 0 0 3px 8px; }
.search { width: 772px; height: 72px; border-radius: 8px; background: #e8eaed; display: flex; align-items: center; padding-left: 40px; font-size: 24px; color: #80868b; }
.search span { margin: -1px 0 0 27px; letter-spacing: .82px; }
.header-icons { margin-left: 209px; display: flex; align-items: center; }
.header-icons svg:nth-child(2) { margin-left: 43px; }
.header-icons svg:nth-child(3) { margin-left: 47px; }
.avatar { width: 48px; height: 48px; margin-left: 38px; border-radius: 50%; background: #0a0b0b; display: flex; align-items: center; justify-content: center; }
.app-body { flex: 1; display: flex; min-height: 0; }

/* Icon rail */
.rail { width: 84px; flex: none; border-right: 1px solid #d3d5d9; display: flex; flex-direction: column; align-items: center; padding: 35px 0 0 1px; }
.r-active { width: 54px; height: 54px; margin-top: 31px; border-radius: 50%; background: #1a73e8; display: flex; align-items: center; justify-content: center; }
.r-explore { margin-top: 30px; }
.r-ads { margin-top: 42px; }
.r-gear { margin-top: auto; margin-bottom: 47px; }

/* Report navigation */
.sidenav { width: 444px; flex: none; padding-top: 12px; font-size: 21px; font-weight: 500; color: #202124; letter-spacing: .6px; }
.item { height: 54px; width: 369px; display: flex; align-items: center; padding-left: 30px; }
.n1 { letter-spacing: .54px; }
.n2 { letter-spacing: .45px; }
.n5 { letter-spacing: .75px; }
.n9 { letter-spacing: .7px; }
.n10 { letter-spacing: .3px; }
.selected { background: #e8f0fe; border-radius: 0 27px 27px 0; color: #1967d2; }
.sidenav hr { margin: 8px 0 7px 18px; width: 333px; border: 0; height: 1px; background: #dadce0; }
.group { color: #5f6368; justify-content: space-between; padding-right: 23px; }
.sub { padding-left: 20px; }
.sub i { border: 5.500px solid transparent; border-left: 6px solid #202124; border-right: 0; margin-right: 28px; }
.leaf i { visibility: hidden; }
.library { margin-top: 61px; padding-left: 26px; }
.library span { margin-left: 19px; }
.sidenav hr.wide { width: 346px; margin: 22px 0 0 19px; }
.collapse { display: flex; padding: 30px 0 0 323px; }

/* Report content */
.content { flex: 1; position: relative; display: flex; flex-direction: column; }
.filters { height: 82px; width: 1240px; border-bottom: 1px solid #d5d7da; display: flex; align-items: center; padding-top: 15px; font-size: 18px; color: #202124; }
.chip-users { width: 134px; height: 36px; border-radius: 18px; background: #e8f0fe; display: flex; align-items: center; padding-left: 3px; margin-top: -1px; }
.chip-users b { width: 30px; height: 30px; border-radius: 50%; background: #1a73e8; color: #fff; font: 500 21px/30px Roboto, sans-serif; text-align: center; }
.chip-users span { margin-left: 12px; }
.chip-add { margin: -1px 0 0 12px; width: 194px; height: 36px; border: 1px dashed #80868b; border-radius: 18px; display: flex; align-items: center; padding-left: 18px; font-weight: 500; }
.chip-add svg { margin-left: 12px; }
.daterange { margin-left: auto; padding-right: 17px; display: flex; align-items: center; color: #5f6368; white-space: nowrap; }
.daterange .tri { margin-top: -2px; }
.preset { height: 25px; width: 101px; background: #f1f3f4; font: 500 15px/25px Roboto, sans-serif; color: #3c4043; text-align: center; margin-top: 6px; letter-spacing: .24px; }
.dates { margin: 7px 12px 0 10px; font-size: 21px; font-weight: 600; letter-spacing: -.05px; }
.titlebar { height: 146px; width: 1222px; display: flex; justify-content: space-between; padding-top: 24px; }
h1 { font-size: 33px; line-height: 48px; color: #202124; letter-spacing: .1px; }
.actions { display: flex; align-items: center; height: 38px; gap: 23px; padding-right: 1px; }
.actions svg:nth-child(2) { margin: 0 -1px 0 1px; }
.actions svg:nth-child(4) { margin-left: 14px; }
.card { margin-left: -1px; width: 1179px; flex: 1; border: 1px solid #dadce0; border-bottom: 0; border-radius: 12px 12px 0 0; background: #fff; overflow: hidden; }
.metrics { height: 151px; display: flex; }
.metric { padding: 30px 36px 0; color: #5f6368; height: 150px; }
.label { display: flex; align-items: center; height: 30px; font-size: 21px; font-weight: 400; white-space: nowrap; }
.label svg { margin: -3px 0 0 10px; }
.value { font-size: 42px; line-height: 54px; white-space: nowrap; }
.m2 { letter-spacing: .35px; }
.m3 { letter-spacing: .4px; font-weight: 500; }
.m4 { letter-spacing: .4px; }
.v3 { letter-spacing: 1.400px; }
.v4 { letter-spacing: 2px; }
.current { width: 127px; padding-left: 35px; color: #202124; position: relative; }
.current .label { color: #1a73e8; }
.current::before { content: ""; position: absolute; left: 39px; top: 0; width: 48px; height: 6px; border-radius: 0 0 6px 6px; background: #1a73e8; }
.m-new { width: 173px; padding-left: 35px; }
.hover { width: 365px; background: #f0f1f3; border-radius: 8px; }
.hover .label { color: #202124; }
.status { margin: 36px 36px 0 auto; width: 90px; height: 42px; border: 1px solid #dadce0; border-radius: 21px; display: flex; align-items: center; padding-left: 11px; gap: 21px; }
.axis text { font: 18px Roboto, sans-serif; fill: #5f6368; }
.scrollbar { position: absolute; right: 0; top: 0; width: 9px; height: 101px; border-radius: 5px; background: #d8dade; border: 1px solid #c1c3c6; }
.feedback { position: absolute; left: 1232px; top: 677px; width: 60px; height: 60px; padding: 1px 0 0; border: 0; border-radius: 50%; background: #fff; box-shadow: 0 3px 7px rgba(0,0,0,.3), 0 4px 18px rgba(0,0,0,.12); display: flex; align-items: center; justify-content: center; }

/* Browser sidebar */
.edgebar { flex: 1; display: flex; flex-direction: column; align-items: center; padding: 16px 1px 0 0; }
.edgebar svg:nth-child(2) { margin-top: 35px; }
.edgebar svg:nth-child(3) { margin-top: 37px; }
.edgebar svg:nth-child(4) { margin-top: 34px; }
.edgebar svg:nth-child(5) { margin-top: 33px; }
.edgebar svg:nth-child(6) { margin-top: 33px; }
.edgebar svg:nth-child(7) { margin-top: 36px; }
.edgebar .add { margin-top: 46px; }
.sep { width: 42px; height: 1px; background: #686868; margin: auto 0 24px; }
.edgebar svg:last-child { margin: 36px 0 20px; }

/* Taskbar */
.taskbar { height: 72px; flex: none; border-top: 2px solid #744946; display: flex; align-items: center; color: #fff; font: 18px/24px "Open Sans", sans-serif; background: linear-gradient(95deg, #5c2a2b 0, #642b2b 16%, #7a312c 28%, #7a312e 35%, #743034 40%, #5e2b2d 50%, #6b2c2e 57%, #7c2d28 63%, #752c29 68%, #692927 74%, #7a3b30 79%, #8c513a 83.500%, #864437 87%, #7c3632 90%, #66302f 96%, #5e2c2d 100%); }
.weather { display: flex; align-items: center; padding-left: 29px; width: 630px; }
.weather svg { margin: -4px 11px 0 0; }
.weather p { letter-spacing: -.5px; position: static; }
.weather > div, .lang, .clock { margin-top: -3px; }
.dim { color: #dcc8c8; }
.apps { display: flex; margin-top: -1px; }
.apps span { width: 66.200px; height: 70px; display: flex; align-items: center; justify-content: center; position: relative; }
.running::after { content: ""; position: absolute; left: 29px; bottom: 6px; width: 9px; height: 5px; border-radius: 3px; background: #c2a3a2; }
.focus::before { content: ""; position: absolute; left: 3px; top: 5px; width: 60px; height: 60px; border-radius: 6px; background: rgba(255,255,255,.09); border: 1px solid rgba(255,255,255,.08); }
.focus::after { left: 21px; width: 24px; background: #e2ab99; }
.focus svg { position: relative; }
.badge { position: absolute; right: 4px; top: 8px; width: 31px; height: 24px; border-radius: 12px; background: #e2ab99; color: #111; font: 17px/24px "Open Sans", sans-serif; text-align: center; letter-spacing: -.5px; }
.mini { position: absolute; right: 7px; top: 16px; width: 23px; height: 17px; border-radius: 7px; background: #e9403c; color: #fff; font: 13px/16px "Open Sans", sans-serif; text-align: center; letter-spacing: -.8px; }
.tray { display: flex; align-items: center; margin-left: auto; padding-right: 30px; }
.tray p { letter-spacing: -.5px; }
.tray .date { letter-spacing: -.1px; }
.lang { width: 40px; margin-left: 28px; text-align: center; }
.lang p { letter-spacing: -.1px; }
.wifi { margin-left: 25px; }
.vol { margin-left: 11px; }
.bat { margin: -4px 0 0 12px; }
.clock { text-align: right; width: 100px; margin-left: 15px; margin-right: 12px; }
.notif { width: 24px; height: 24px; border-radius: 50%; background: #e2ab99; color: #222; font: 15px/24px "Open Sans", sans-serif; text-align: center; }
```
